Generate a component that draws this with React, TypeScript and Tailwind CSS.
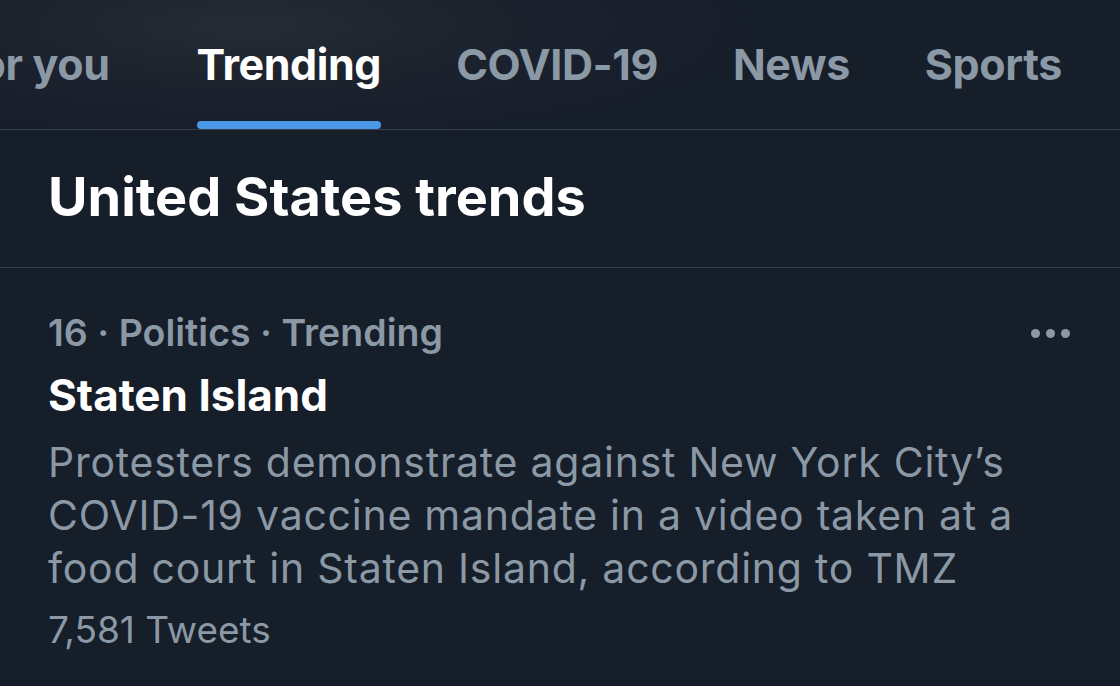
import React from 'react'

const tabs = ['For you', 'Trending', 'COVID-19', 'News', 'Sports']

const App: React.FC = () => {
  return (
    <div className="w-[1120px] h-[686px] overflow-hidden bg-[#161e29] font-['Inter','Noto_Sans',sans-serif]">
      {/* Tab bar (scrolled, first tab partly hidden) */}
      <header className="h-[130px] border-b border-[#363f4b] bg-[radial-gradient(ellipse_45%_90%_at_22%_20%,#262b33_0%,#1b222d_55%,#161e29_100%)] overflow-hidden">
        <nav className="flex h-full gap-[75px] -ml-[44px]">
          {tabs.map((tab, i) => {
            const active = tab === 'Trending'
            return (
              <div
                key={tab}
                className={`flex h-full shrink-0 flex-col justify-between pt-[38px] ${i === 0 ? 'mr-[12px]' : ''}`}
              >
                <span
                  className={`text-[43px] leading-[52px] font-bold tracking-[-0.4px] whitespace-nowrap ${
                    active ? 'text-white' : 'text-[#8b98a5]'
                  }`}
                >
                  {tab}
                </span>
                <div className={`h-[8px] w-full rounded-full ${active ? 'bg-[#4a99e9]' : 'bg-transparent'}`} />
              </div>
            )
          })}
        </nav>
      </header>

      {/* Section heading */}
      <section className="h-[138px] border-b border-[#363f4b] px-[48px] pt-[37px]">
        <h2 className="text-[54px] leading-[60px] font-bold text-white">United States trends</h2>
      </section>

      {/* Trend item */}
      <article className="px-[48px] pt-[43px]">
        <div className="flex items-start justify-between">
          <p className="text-[37.5px] leading-[44px] font-semibold text-[#8b98a5]">16 · Politics · Trending</p>
          <button className="mt-[18px] flex gap-[6px] pr-[2px]" aria-label="More">
            <span className="h-[9px] w-[9px] rounded-full bg-[#8b98a5]" />
            <span className="h-[9px] w-[9px] rounded-full bg-[#8b98a5]" />
            <span className="h-[9px] w-[9px] rounded-full bg-[#8b98a5]" />
          </button>
        </div>
        <h3 className="mt-[14px] text-[44px] leading-[52px] font-bold text-white">Staten Island</h3>
        <p className="mt-[15px] text-[41px] leading-[53px] tracking-[0.75px] text-[#8b98a5]">
          Protesters demonstrate against New York City’s COVID-19 vaccine mandate in a video taken at a food
          court in Staten Island, according to TMZ
        </p>
        <p className="mt-[13px] text-[37px] leading-[44px] text-[#8b98a5]">7,581 Tweets</p>
      </article>
    </div>
  )
}

export default App
